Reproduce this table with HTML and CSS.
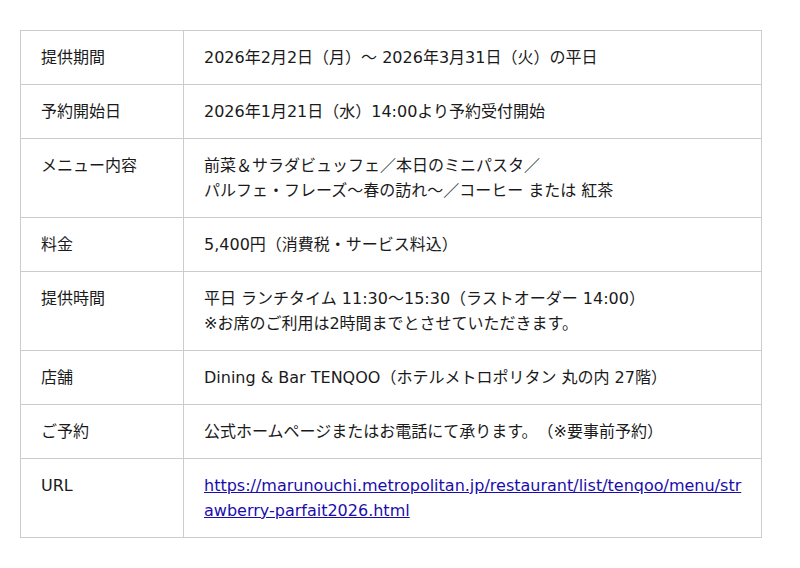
FILE: index.html
```html
<!DOCTYPE html>
<html lang="ja">
<head>
<meta charset="utf-8">
<link rel="stylesheet" href="styles.css">
</head>
<body>
<table class="info">
  <tr><th>提供期間</th><td>2026年2月2日（月）～ 2026年3月31日（火）の平日</td></tr>
  <tr><th>予約開始日</th><td>2026年1月21日（水）14:00より予約受付開始</td></tr>
  <tr><th>メニュー内容</th><td>前菜＆サラダビュッフェ／本日のミニパスタ／<br>パルフェ・フレーズ～春の訪れ～／コーヒー または 紅茶</td></tr>
  <tr><th>料金</th><td>5,400円（消費税・サービス料込）</td></tr>
  <tr><th>提供時間</th><td>平日 ランチタイム 11:30～15:30（ラストオーダー 14:00）<br>※お席のご利用は2時間までとさせていただきます。</td></tr>
  <tr><th>店舗</th><td>Dining &amp; Bar TENQOO（ホテルメトロポリタン 丸の内 27階）</td></tr>
  <tr><th>ご予約</th><td>公式ホームページまたはお電話にて承ります。（※要事前予約）</td></tr>
  <tr><th>URL</th><td><a class="link" href="#">https://marunouchi.metropolitan.jp/restaurant/list/tenqoo/menu/str<br>awberry-parfait2026.html</a></td></tr>
</table>
</body>
</html>
```
FILE: styles.css
```css
html, body {
  margin: 0;
  padding: 0;
  background: #fff;
}
body {
  padding: 30px 38px 0 20px;
  font-family: "DejaVu Sans", "Noto Sans CJK JP", sans-serif;
  font-size: 16px;
  line-height: 25px;
  color: #1a1a1a;
  text-spacing-trim: space-all;
}
.info {
  width: 742px;
  border-collapse: collapse;
  table-layout: fixed;
}
.info th, .info td {
  border: 1px solid #ccc;
  padding: 14px 20px;
  text-align: left;
  vertical-align: top;
  font-weight: normal;
}
.info td {
  padding-right: 16px;
}
.info th {
  width: 122px;
}
.link {
  color: #1a0dab;
  text-decoration: underline;
  word-break: break-all;
}
```
